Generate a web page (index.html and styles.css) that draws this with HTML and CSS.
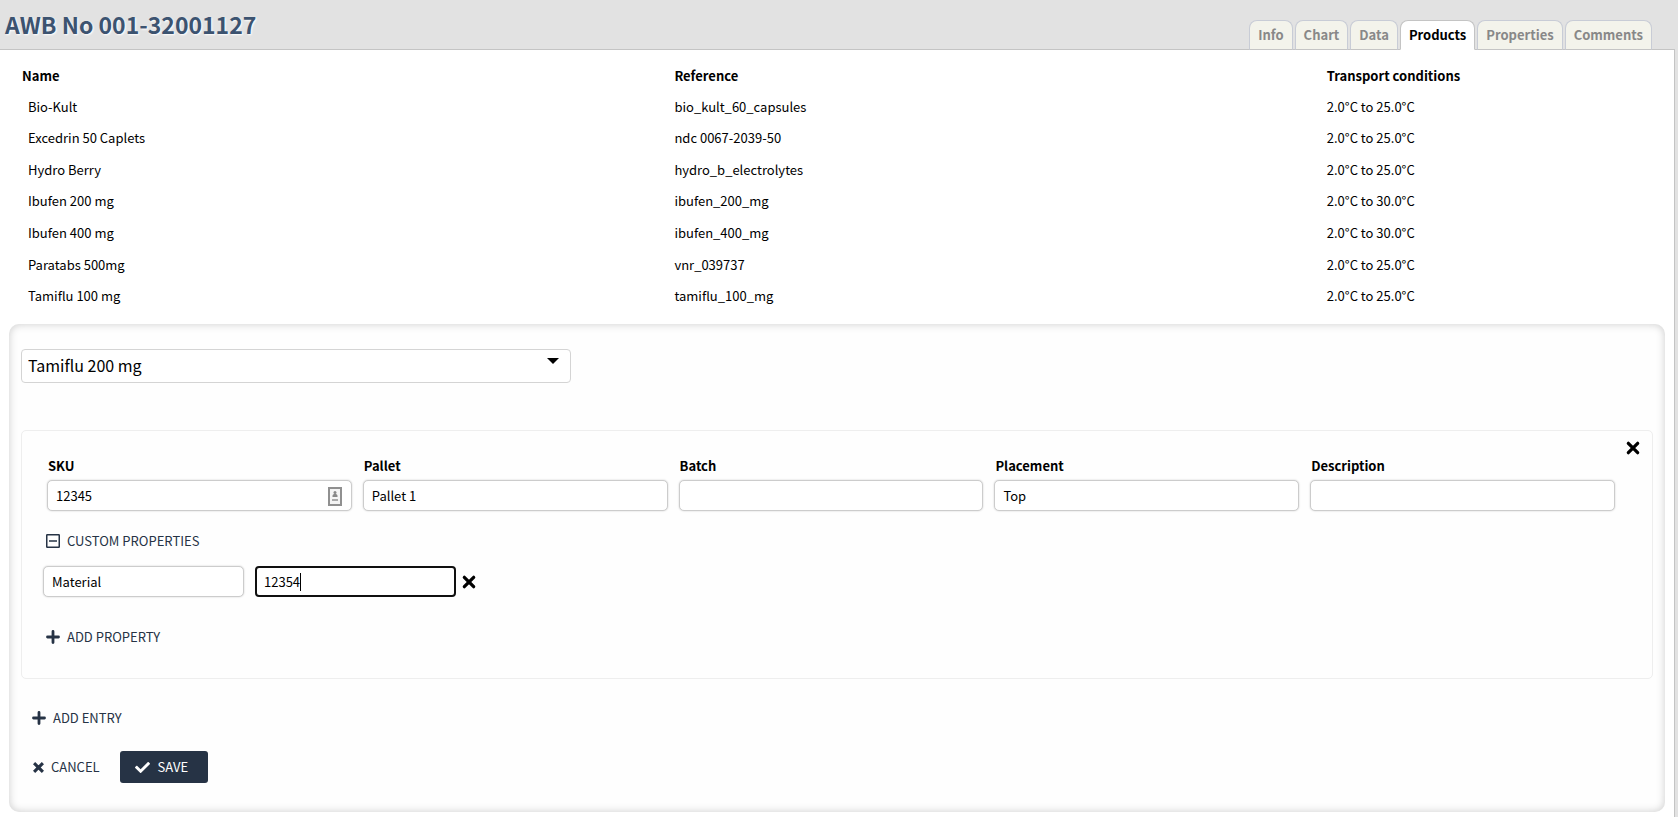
FILE: index.html
```html
<!DOCTYPE html>
<html lang="en">
<head>
<meta charset="utf-8">
<title>AWB No 001-32001127</title>
<link rel="stylesheet" href="styles.css">
</head>
<body>
<header class="header">
  <h1 class="title">AWB No 001-32001127</h1>
  <nav class="tabs">
    <a class="tab" href="#info">Info</a>
    <a class="tab" href="#chart">Chart</a>
    <a class="tab" href="#data">Data</a>
    <a class="tab tab-active" href="#products" aria-current="page">Products</a>
    <a class="tab" href="#properties">Properties</a>
    <a class="tab" href="#comments">Comments</a>
  </nav>
</header>
<main class="content">
  <table class="products">
    <thead>
      <tr><th>Name</th><th>Reference</th><th>Transport conditions</th></tr>
    </thead>
    <tbody>
      <tr><td>Bio-Kult</td><td>bio_kult_60_capsules</td><td>2.0°C to 25.0°C</td></tr>
      <tr><td>Excedrin 50 Caplets</td><td>ndc 0067-2039-50</td><td>2.0°C to 25.0°C</td></tr>
      <tr><td>Hydro Berry</td><td>hydro_b_electrolytes</td><td>2.0°C to 25.0°C</td></tr>
      <tr><td>Ibufen 200 mg</td><td>ibufen_200_mg</td><td>2.0°C to 30.0°C</td></tr>
      <tr><td>Ibufen 400 mg</td><td>ibufen_400_mg</td><td>2.0°C to 30.0°C</td></tr>
      <tr><td>Paratabs 500mg</td><td>vnr_039737</td><td>2.0°C to 25.0°C</td></tr>
      <tr><td>Tamiflu 100 mg</td><td>tamiflu_100_mg</td><td>2.0°C to 25.0°C</td></tr>
    </tbody>
  </table>

  <form class="panel">
    <div class="select-wrap">
      <select class="select" aria-label="Product">
        <option>Tamiflu 200 mg</option>
      </select>
      <svg class="select-arrow" viewBox="0 0 12 6" aria-hidden="true"><path d="M0 0h12L6 6z"/></svg>
    </div>

    <section class="entry">
      <div class="entry-fields">
        <div class="field">
          <label class="label" for="sku">SKU</label>
          <div class="input-wrap">
            <input class="input" id="sku" type="text" value="12345">
            <svg class="autofill" viewBox="0 0 14 19" aria-hidden="true">
              <rect class="autofill-frame" x="1" y="1" width="12" height="17"/>
              <circle cx="7" cy="5.500" r="1.500"/>
              <path d="M4.500 10V9c0-1.500 1-2 2.500-2s2.500.500 2.500 2v1z"/>
              <path class="autofill-lines" d="M4 13h6"/>
            </svg>
          </div>
        </div>
        <div class="field">
          <label class="label" for="pallet">Pallet</label>
          <input class="input" id="pallet" type="text" value="Pallet 1">
        </div>
        <div class="field">
          <label class="label" for="batch">Batch</label>
          <input class="input" id="batch" type="text">
        </div>
        <div class="field">
          <label class="label" for="placement">Placement</label>
          <input class="input" id="placement" type="text" value="Top">
        </div>
        <div class="field">
          <label class="label" for="description">Description</label>
          <input class="input" id="description" type="text">
        </div>
      </div>
      <button class="remove remove-entry" type="button" aria-label="Remove entry">
        <svg class="icon-x" viewBox="0 0 12 12" aria-hidden="true"><path d="M2 2l8 8M10 2l-8 8"/></svg>
      </button>

      <button class="link-button" type="button">
        <svg class="icon" viewBox="0 0 14 14" aria-hidden="true"><rect class="thin" x="0.750" y="0.750" width="12.500" height="12.500" rx="0.500"/><path class="thin" d="M3 7h8"/></svg>
        CUSTOM PROPERTIES
      </button>

      <div class="property">
        <input class="input property-input" type="text" value="Material" aria-label="Property name">
        <div class="input property-input focused">
          <input class="bare-input" type="text" value="12354" aria-label="Property value"><span class="caret"></span>
        </div>
        <button class="remove" type="button" aria-label="Remove property">
          <svg class="icon-x" viewBox="0 0 12 12" aria-hidden="true"><path d="M2 2l8 8M10 2l-8 8"/></svg>
        </button>
      </div>

      <button class="link-button" type="button">
        <svg class="icon" viewBox="0 0 14 14" aria-hidden="true"><path class="thick" d="M7 1.500v11M1.500 7h11"/></svg>
        ADD PROPERTY
      </button>
    </section>

    <button class="link-button add-entry" type="button">
      <svg class="icon" viewBox="0 0 14 14" aria-hidden="true"><path class="thick" d="M7 1.500v11M1.500 7h11"/></svg>
      ADD ENTRY
    </button>

    <div class="actions">
      <button class="link-button cancel" type="button">
        <svg class="icon-cancel" viewBox="1 1 10 10" aria-hidden="true"><path d="M2 2l8 8M10 2l-8 8"/></svg>
        CANCEL
      </button>
      <button class="save" type="submit">
        <svg class="icon-check" viewBox="0 0 512 512" aria-hidden="true"><path d="M173.900 439.400l-166.400-166.400c-10-10-10-26.200 0-36.200l36.200-36.200c10-10 26.200-10 36.200 0L192 312.700 432.100 72.600c10-10 26.200-10 36.200 0l36.200 36.200c10 10 10 26.200 0 36.200l-294.400 294.400c-10 10-26.200 10-36.200 0z"/></svg>
        SAVE
      </button>
    </div>
  </form>
</main>
</body>
</html>
```
FILE: styles.css
```css
* {
  box-sizing: border-box;
}

body {
  margin: 0;
  min-height: 100vh;
  display: flex;
  flex-direction: column;
  background: #e2e2e2;
  color: #000;
  font: 13px/20px "Noto Sans CJK SC", "Open Sans", sans-serif;
}

button,
input,
select {
  font: inherit;
  color: inherit;
}

.header {
  display: flex;
  justify-content: space-between;
  align-items: flex-end;
  height: 50px;
  padding: 0 26px 0 5px;
}

.title {
  margin: 0;
  align-self: flex-start;
  color: #3c5370;
  font-size: 23px;
  line-height: 48px;
  text-shadow: 1px 1px 2px #fff;
}

.tabs {
  display: flex;
  gap: 2px;
}

.tab {
  height: 30px;
  padding: 0 8px;
  border: 1px solid #c8ccd6;
  border-bottom-color: #c4c4c4;
  border-radius: 8px 8px 0 0;
  background: #f3f3eb;
  color: #888;
  font-weight: bold;
  line-height: 28px;
  text-decoration: none;
  z-index: 1;
}

.tab-active {
  border-color: #c4c4c4;
  border-bottom-color: #fff;
  background: #fff;
  color: #000;
}

.content {
  flex: 1;
  margin: -1px 3px 0 0;
  padding: 10px 9px 4px;
  border: 1px solid #c4c4c4;
  border-left: 0;
  border-bottom: 0;
  background: #fff;
}

.products {
  width: calc(100% - 25px);
  height: 252px;
  margin: 0 12px 12px 13px;
  table-layout: fixed;
  border-collapse: collapse;
  text-align: left;
}

.products th,
.products td {
  width: 40%;
  height: 31px;
  padding: 0;
}

.products th:last-child {
  width: 20%;
}

.products td:first-child {
  padding-left: 6px;
}

.panel {
  padding: 25px 12px 29px;
  border-radius: 10px;
  background: #fefefe;
  box-shadow: inset 0 0 8px #ccc;
}

.select-wrap {
  position: relative;
  width: 550px;
  max-width: 100%;
}

.select {
  display: block;
  width: 100%;
  height: 34px;
  padding: 0 6px 2px;
  border: 1px solid #d4d4d4;
  border-radius: 4px;
  background: #fff;
  font-size: 16px;
  line-height: 30px;
  appearance: none;
}

.select-arrow {
  position: absolute;
  top: 9px;
  right: 12px;
  width: 12px;
  height: 6px;
}

.entry {
  position: relative;
  margin-top: 47px;
  padding: 25px 37px 31px 25px;
  border: 1px solid #eee;
  border-radius: 5px;
}

.entry-fields {
  display: grid;
  grid-template-columns: repeat(5, 1fr);
  gap: 11px;
  margin-bottom: 20px;
}

.field {
  display: flex;
  flex-direction: column;
  gap: 4px;
}

.label {
  padding-left: 1px;
  font-weight: bold;
}

.input-wrap {
  position: relative;
}

.input {
  width: 100%;
  height: 31px;
  padding: 0 8px;
  border: 1px solid #ccc;
  border-radius: 5px;
  background: #fff;
  box-shadow: 0 0 2px #ccc;
}

.autofill {
  position: absolute;
  top: 7px;
  right: 10px;
  width: 14px;
  height: 19px;
  fill: #888;
}

.autofill-frame {
  fill: #f4f4f4;
  stroke: #909090;
  stroke-width: 2;
}

.autofill-lines {
  stroke: #aaa;
  stroke-width: 2;
}

.link-button {
  display: flex;
  align-items: center;
  gap: 7px;
  padding: 0 0 0 1px;
  margin: 0 0 0 -2px;
  border: 0;
  background: none;
  color: #263345;
}

.icon {
  width: 14px;
  height: 14px;
  fill: none;
  stroke: #263345;
}

.thin {
  stroke-width: 1.5;
}

.thick {
  stroke-width: 2.8;
  stroke-linecap: round;
}

.remove {
  display: flex;
  padding: 0;
  border: 0;
  background: none;
}

.remove-entry {
  position: absolute;
  top: 10px;
  right: 12px;
}

.icon-x {
  width: 14px;
  height: 14px;
  fill: none;
  stroke: #000;
  stroke-width: 2.8;
  stroke-linecap: round;
}

.property {
  display: flex;
  align-items: center;
  margin: 15px 0 30px -4px;
}

.property-input {
  width: 201px;
  margin-right: 11px;
}

.focused {
  display: flex;
  align-items: center;
  margin-right: 6px;
  padding: 0 7px;
  border: 2px solid #101010;
  border-radius: 4px;
  box-shadow: none;
}

.bare-input {
  field-sizing: content;
  padding: 0;
  border: 0;
  outline: 0;
  background: none;
}

.caret {
  width: 1px;
  height: 18px;
  background: #000;
}

.add-entry {
  margin: 29px 0 0 10px;
}

.actions {
  display: flex;
  align-items: center;
  gap: 20px;
  margin: 23px 0 0 11px;
}

.cancel {
  margin: 0;
}

.icon-cancel {
  width: 11px;
  height: 11px;
  fill: none;
  stroke: #263345;
  stroke-width: 2.8;
}

.save {
  display: flex;
  align-items: center;
  gap: 8px;
  height: 32px;
  padding: 0 20px 0 15px;
  border: 0;
  border-radius: 3px;
  background: #263345;
  color: #fff;
}

.icon-check {
  width: 15px;
  height: 15px;
  fill: #fff;
}
```
